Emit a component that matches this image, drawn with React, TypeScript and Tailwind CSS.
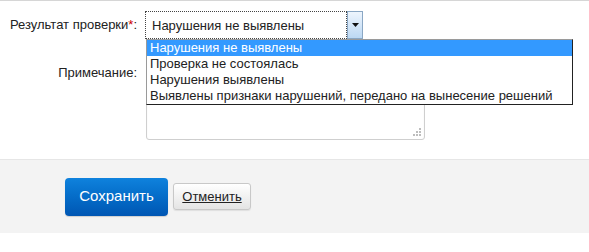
// Форма результата проверки: выбор результата (открытый список), примечание, кнопки
const options = [
  'Нарушения не выявлены',
  'Проверка не состоялась',
  'Нарушения выявлены',
  'Выявлены признаки нарушений, передано на вынесение решений',
]

export default function App() {
  return (
    <div className="h-[252px] w-[589px] overflow-hidden bg-white font-['Liberation_Sans',Arial,sans-serif] text-[13px] text-[#222]">
      <div className="h-px bg-[#d6d6d6]" />

      <div className="relative pt-[10px]">
        {/* Результат проверки */}
        <div className="flex items-center">
          <label className="w-[137px] text-right">
            Результат проверки<span className="text-[#cc0000]">*</span>:
          </label>
          <div className="ml-[8px] flex h-[28px] w-[218px]">
            <div className="flex flex-1 items-center border border-dotted border-[#444] pl-[6px] leading-none">
              Нарушения не выявлены
            </div>
            <div className="flex w-[16px] items-center justify-center border border-[#8aa7c4] bg-gradient-to-b from-[#eef5fd] to-[#bcd8f3]">
              <svg width="7" height="4" viewBox="0 0 7 4">
                <path d="M0 0h7L3.5 4z" fill="#111" />
              </svg>
            </div>
          </div>
        </div>

        {/* Примечание */}
        <div className="mt-[10px] flex items-start">
          <label className="w-[137px] pt-[14px] text-right">Примечание:</label>
          <div className="relative ml-[9px] h-[91px] w-[279px] rounded-[3px] border border-[#cfcfcf] shadow-[inset_0_1px_2px_rgba(0,0,0,0.06)]">
            <svg className="absolute bottom-[3px] right-[3px]" width="9" height="9" viewBox="0 0 9 9">
              <g fill="#bdbdbd">
                <rect x="7" y="1" width="2" height="2" />
                <rect x="4" y="4" width="2" height="2" />
                <rect x="7" y="4" width="2" height="2" />
                <rect x="1" y="7" width="2" height="2" />
                <rect x="4" y="7" width="2" height="2" />
                <rect x="7" y="7" width="2" height="2" />
              </g>
            </svg>
          </div>
        </div>

        {/* открытый список */}
        <ul className="absolute left-[146px] top-[38px] w-[427px] border border-[#222] border-t-[#9a9a9a] border-l-[#9a9a9a] bg-white">
          {options.map((o, i) => (
            <li
              key={o}
              className={
                'h-[16px] pl-[3px] leading-[16px] ' + (i === 0 ? 'bg-[#3399ff] text-white' : 'text-[#222]')
              }
            >
              {o}
            </li>
          ))}
        </ul>
      </div>

      {/* кнопки */}
      <div className="mt-[19px] flex h-[74px] items-center gap-[5px] border-t border-[#e6e6e6] bg-[#f3f3f3] pl-[65px]">
        <button className="h-[38px] w-[103px] rounded-[4px] bg-gradient-to-b from-[#0f82dd] to-[#0056b3] text-[15px] text-white shadow-[0_1px_1px_rgba(0,0,0,0.15)]">
          Сохранить
        </button>
        <button className="h-[27px] w-[78px] rounded-[3px] border border-[#c8c8c8] bg-gradient-to-b from-white to-[#e4e4e4] text-[13px] text-[#222] underline shadow-[0_1px_1px_rgba(0,0,0,0.08)]">
          Отменить
        </button>
      </div>
    </div>
  )
}
